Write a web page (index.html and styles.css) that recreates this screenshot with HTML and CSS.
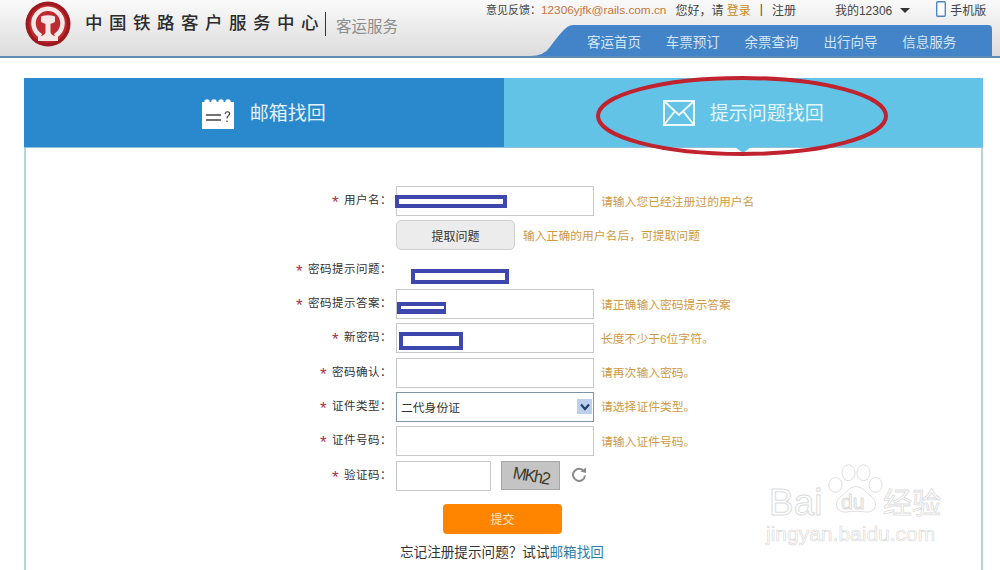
FILE: index.html
```html
<!DOCTYPE html>
<html lang="zh-CN">
<head>
  <meta charset="UTF-8">
  <meta name="viewport" content="width=device-width, initial-scale=1.0">
  <title>提示问题找回</title>
  <link rel="stylesheet" href="styles.css">
</head>
<body>
<header class="site-header">
  <div class="brand">
    <svg class="brand-logo" viewBox="0 0 46 46" width="46" height="46">
      <circle cx="23" cy="23" r="22.500" fill="#9c1a1f"/>
      <circle cx="23" cy="23" r="19" fill="#bd2a30"/>
      <path d="M16 35 A14.500 14.500 0 1 1 30 35" fill="none" stroke="#f5e8e6" stroke-width="4.500"/>
      <path d="M16 15.500 Q23 13 30 15.500 L30 21 L25.500 23 L25.500 31 Q26 34 30 35 L33 36 L33 40 L13 40 L13 36 L16 35 Q20 34 20.500 31 L20.500 23 L16 21 Z" fill="#f5e8e6"/>
    </svg>
    <h1 class="brand-title">中国铁路客户服务中心</h1>
    <span class="brand-sub">客运服务</span>
  </div>
  <div class="header-right">
    <div class="top-links">
      <span class="feedback">意见反馈：<a class="mail" href="#">12306yjfk@rails.com.cn</a></span>
      <span class="hello">您好，请 <a class="login" href="#">登录</a></span>
      <span class="pipe">|</span>
      <span class="reg">注册</span>
      <span class="my">我的12306<i class="caret"></i></span>
      <span class="mobile">
        <svg viewBox="0 0 10 16" width="10" height="16"><rect x="0.700" y="0.700" width="8.600" height="14.600" rx="1" fill="#fff" stroke="#4f86bd" stroke-width="1.400"/></svg>
        手机版
      </span>
    </div>
    <nav class="main-nav">
      <a href="#">客运首页</a>
      <a href="#">车票预订</a>
      <a href="#">余票查询</a>
      <a href="#">出行向导</a>
      <a href="#">信息服务</a>
    </nav>
  </div>
</header>

<main class="panel">
  <div class="tabs">
    <div class="tab tab-mail">
      <svg viewBox="0 0 32 30" width="32" height="30">
        <rect x="0" y="3" width="32" height="27" fill="#fff"/>
        <path d="M3 3a2 2 0 0 1 4 0M10 3a2 2 0 0 1 4 0M17 3a2 2 0 0 1 4 0M24 3a2 2 0 0 1 4 0" fill="#fff" stroke="#fff" stroke-width="1.500"/>
        <path d="M4 16h15M4 21h15" stroke="#444" stroke-width="1.500"/>
        <path d="M23 15q1-3 3.500-2t0 3.500q-1.500 1-1.500 3M25 21.500v1.500" fill="none" stroke="#444" stroke-width="1.200"/>
      </svg>
      <span>邮箱找回</span>
    </div>
    <div class="tab tab-question">
      <svg viewBox="0 0 32 26" width="32" height="26">
        <rect x="1" y="1" width="30" height="24" fill="none" stroke="#eef9fd" stroke-width="2"/>
        <path d="M1 1 L16 15 L31 1 M1 25 L12 11 M31 25 L20 11" fill="none" stroke="#eef9fd" stroke-width="2"/>
      </svg>
      <span>提示问题找回</span>
      <i class="tab-arrow"></i>
    </div>
    <svg class="red-ring" viewBox="0 0 294 84" width="294" height="84">
      <ellipse cx="147" cy="42" rx="144" ry="38" fill="none" stroke="#c0222e" stroke-width="4"/>
    </svg>
  </div>

  <form class="reset-form">
    <div class="row">
      <label><em>*</em>用户名：</label>
      <div class="field"><input type="text"><i class="mark mark-1"></i></div>
      <span class="tip">请输入您已经注册过的用户名</span>
    </div>
    <div class="row">
      <label></label>
      <button type="button" class="fetch-btn">提取问题</button>
      <span class="tip tip-near">输入正确的用户名后，可提取问题</span>
    </div>
    <div class="row">
      <label><em>*</em>密码提示问题：</label>
      <div class="field field-plain"><i class="mark mark-2"></i></div>
    </div>
    <div class="row">
      <label><em>*</em>密码提示答案：</label>
      <div class="field"><input type="text"><i class="mark mark-3"></i></div>
      <span class="tip">请正确输入密码提示答案</span>
    </div>
    <div class="row">
      <label><em>*</em>新密码：</label>
      <div class="field"><input type="text"><i class="mark mark-4"></i></div>
      <span class="tip">长度不少于6位字符。</span>
    </div>
    <div class="row">
      <label><em>*</em>密码确认：</label>
      <div class="field"><input type="text"></div>
      <span class="tip">请再次输入密码。</span>
    </div>
    <div class="row">
      <label><em>*</em>证件类型：</label>
      <div class="field select">
        <span>二代身份证</span>
        <i class="select-btn">
          <svg viewBox="0 0 10 8" width="10" height="8"><path d="M1 1.500 L5 6 L9 1.500" fill="none" stroke="#24406e" stroke-width="2.200"/></svg>
        </i>
      </div>
      <span class="tip">请选择证件类型。</span>
    </div>
    <div class="row">
      <label><em>*</em>证件号码：</label>
      <div class="field"><input type="text"></div>
      <span class="tip">请输入证件号码。</span>
    </div>
    <div class="row">
      <label><em>*</em>验证码：</label>
      <div class="field field-code"><input type="text"></div>
      <span class="captcha"><b>MKh2</b></span>
      <svg class="refresh" viewBox="0 0 16 16" width="16" height="16">
        <path d="M13 5.500 A6 6 0 1 0 14 9.500" fill="none" stroke="#8a8a8a" stroke-width="2"/>
        <path d="M9.500 5.500 L15 1.500 L15 7 Z" fill="#8a8a8a"/>
      </svg>
    </div>
    <button type="button" class="submit-btn">提交</button>
    <p class="alt-link">忘记注册提示问题？试试<a href="#">邮箱找回</a></p>
  </form>
</main>

<div class="watermark">
  <svg class="paw" viewBox="0 0 60 56" width="56" height="57">
    <g fill="#fff" stroke="#dcdcdc" stroke-width="1">
      <ellipse cx="8" cy="22" rx="7" ry="8"/>
      <ellipse cx="22" cy="9" rx="7" ry="8.500"/>
      <ellipse cx="38" cy="9" rx="7" ry="8.500"/>
      <ellipse cx="51" cy="22" rx="7" ry="8"/>
      <path d="M30 24 C22 24 20 30 14 34 C6 40 8 52 20 51 C26 50 34 50 40 51 C52 52 54 40 46 34 C40 30 38 24 30 24 Z"/>
    </g>
  </svg>
  <span class="wm-big">Bai</span>
  <span class="wm-du">du</span>
  <span class="wm-cn">经验</span>
  <span class="wm-url">jingyan.baidu.com</span>
</div>
</body>
</html>
```

FILE: styles.css
```css
* {
  margin: 0;
  padding: 0;
  box-sizing: border-box;
}

body {
  width: 1000px;
  height: 570px;
  position: relative;
  overflow: hidden;
  background: #fff;
  color: #333;
  font-family: "Liberation Sans", "Noto Sans CJK SC", sans-serif;
  font-size: 12px;
}

a {
  text-decoration: none;
}

/* header */
.site-header {
  height: 58px;
  display: flex;
  justify-content: space-between;
  background: linear-gradient(#fafafa, #dcdcdc);
  border-bottom: 2px solid #5f8bb5;
}

.brand {
  display: flex;
  align-items: center;
  height: 48px;
  padding-left: 25px;
}

.brand-title {
  margin-left: 14px;
  border-right: 1px solid #333;
  height: 24px;
  line-height: 22px;
  font-size: 17.500px;
  font-weight: 500;
  letter-spacing: 6.500px;
  color: #2b2b2b;
}

.brand-sub {
  margin-left: 10px;
  margin-top: 2px;
  font-size: 15.500px;
  color: #8d8d8d;
}

.header-right {
  width: 514px;
  display: flex;
  flex-direction: column;
  align-items: flex-end;
}

.top-links {
  width: 100%;
  height: 25px;
  display: flex;
  align-items: center;
  padding-bottom: 7px;
  font-size: 12px;
  color: #444;
  white-space: nowrap;
}

.feedback {
  font-size: 11px;
}

.mail {
  color: #c9743f;
  font-size: 11.800px;
}

.hello {
  margin-left: 9px;
}

.login {
  color: #c98a1c;
}

.pipe {
  margin-left: 9px;
}

.reg {
  margin-left: 9px;
}

.my {
  margin-left: 39px;
  display: flex;
  align-items: center;
}

.caret {
  margin-left: 8px;
  margin-top: 2px;
  border-top: 5px solid #333;
  border-left: 5px solid transparent;
  border-right: 5px solid transparent;
}

.mobile {
  margin-left: 26px;
  display: flex;
  align-items: center;
  gap: 4px;
}

.main-nav {
  width: 462px;
  height: 31px;
  margin-right: 8px;
  display: flex;
  align-items: center;
  gap: 24.800px;
  padding-left: 57px;
  background: #4384c8;
  clip-path: path("M0 31 Q14 31 20 22 Q30 8 36 3 Q39 0 44 0 L458 0 Q462 0 462 4 L462 31 Z");
}

.main-nav a {
  color: #d3e6f6;
  font-size: 13.500px;
}

/* tabs */
.panel {
  width: 959px;
  height: 512px;
  margin: 20px 0 0 24px;
  border-left: 2px solid #b5d6dc;
  border-right: 2px solid #b5d6dc;
}

.tabs {
  position: relative;
  display: flex;
  height: 70px;
  margin: 0 -2px;
  border-bottom: 1px solid #8fc3d5;
}

.tab {
  position: relative;
  width: 50%;
  flex: none;
  display: flex;
  align-items: center;
  justify-content: center;
  gap: 16px;
  font-size: 19px;
}

.tab span {
  padding-bottom: 3px;
}

.tab-mail {
  background: #2a88cc;
  color: #e3f2fb;
}

.tab-mail svg {
  margin-top: 3px;
}

.tab-question {
  background: #63c3e6;
  color: #e4f5fb;
  gap: 15px;
}

.tab-arrow {
  position: absolute;
  left: 231px;
  bottom: -6px;
  border-top: 6px solid #63c3e6;
  border-left: 8px solid transparent;
  border-right: 8px solid transparent;
}

.red-ring {
  position: absolute;
  left: 571px;
  top: -4px;
}

/* form */
.reset-form {
  padding-top: 38px;
}

.row {
  display: flex;
  align-items: center;
  height: 34.300px;
  padding-bottom: 4px;
}

.row label {
  width: 370px;
  flex: none;
  text-align: right;
  padding-right: 4px;
  font-size: 11.500px;
  color: #333;
  letter-spacing: 0.500px;
}

.row em {
  font-style: normal;
  color: #a8324a;
  font-size: 17px;
  line-height: 1;
  margin-right: 5px;
  vertical-align: -4px;
}

.field {
  position: relative;
  width: 198px;
  height: 30px;
  flex: none;
}

.field input {
  display: block;
  width: 100%;
  height: 100%;
  border: 1px solid #c9c9c9;
  background: #fff;
}

.field-plain {
  height: 30px;
}

.field-code {
  width: 95px;
}

/* blue scribbles pasted over the private values */
.mark {
  position: absolute;
  background: #fff;
  border-style: solid;
  border-color: #3d47ad;
}

.mark-1 {
  left: -1px;
  top: 9px;
  width: 112px;
  height: 13px;
  border-width: 4px;
}

.mark-2 {
  left: 15px;
  top: 14px;
  width: 98px;
  height: 15px;
  border-width: 4px;
}

.mark-3 {
  left: 1px;
  top: 13px;
  width: 49px;
  height: 12px;
  border-width: 4px 2px 5px 4px;
}

.mark-4 {
  left: 3px;
  top: 9px;
  width: 64px;
  height: 18px;
  border-width: 4px;
}

.select {
  display: flex;
  align-items: center;
  justify-content: space-between;
  padding: 0 1px 0 4px;
  border: 1px solid #7d97a8;
  background: #fff;
  font-size: 11.800px;
}

.select-btn {
  width: 15px;
  height: 15px;
  display: flex;
  align-items: center;
  justify-content: center;
  background: #bcd0ee;
}

.tip {
  margin-left: 7px;
  padding-bottom: 2px;
  font-size: 11.800px;
  color: #cf9a3e;
}

.tip-near {
  margin-left: 8px;
}

.fetch-btn {
  width: 119px;
  height: 30px;
  border: 1px solid #cfcfcf;
  border-radius: 5px;
  background: #ececec;
  color: #333;
  font-family: inherit;
  font-size: 12px;
}

.captcha {
  width: 59px;
  height: 29px;
  margin-left: 10px;
  background: #c4c4c4;
  border: 1px solid #a5a5a5;
  text-align: center;
  line-height: 27px;
}

.captcha b {
  display: inline-block;
  font-weight: 400;
  font-style: italic;
  font-size: 16px;
  letter-spacing: -1.500px;
  color: #3c3a28;
  transform: skewY(10deg) scaleY(1.100);
}

.refresh {
  margin: -4px 0 0 11px;
}

.submit-btn {
  display: block;
  width: 119px;
  height: 30px;
  margin: 9px 0 0 417px;
  border: none;
  border-radius: 4px;
  background: #ff8400;
  color: #fbe3c4;
  font-family: inherit;
  font-size: 12px;
}

.alt-link {
  margin: 7px 0 0 374px;
  font-size: 13.600px;
  color: #333;
}

.alt-link a {
  color: #2a7fa8;
}

/* photo watermark, sits over the page corner */
.watermark {
  position: absolute;
  left: 766px;
  top: 462px;
  width: 200px;
  height: 86px;
  color: #fff;
  -webkit-text-stroke: 1px #dcdcdc;
}

.paw {
  position: absolute;
  left: 62px;
  top: 0;
}

.wm-big {
  position: absolute;
  left: 3px;
  top: 20px;
  font-size: 37px;
}

.wm-du {
  position: absolute;
  left: 75px;
  top: 28px;
  font-size: 21px;
}

.wm-cn {
  position: absolute;
  left: 117px;
  top: 18px;
  font-size: 29px;
  -webkit-text-stroke-width: 0.800px;
}

.wm-url {
  position: absolute;
  left: 0;
  top: 60px;
  font-size: 21px;
  -webkit-text-stroke-width: 0.700px;
}
```
